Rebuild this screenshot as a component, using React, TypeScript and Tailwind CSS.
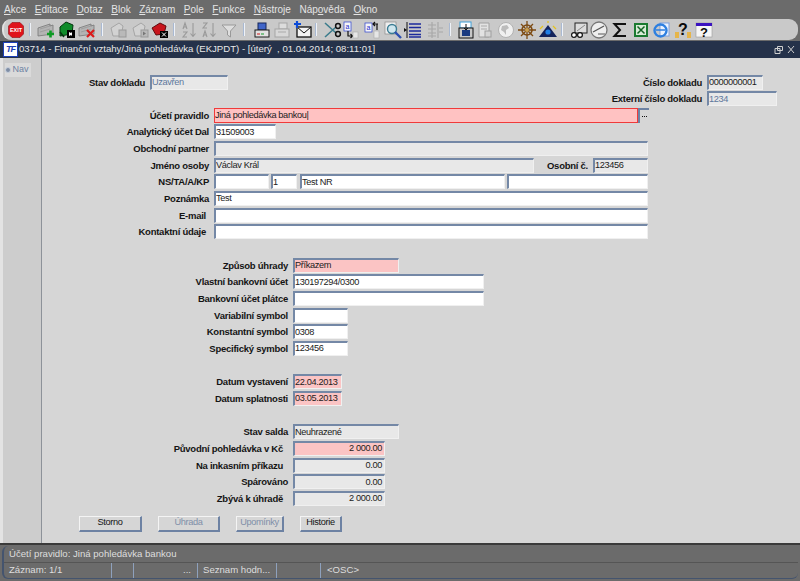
import React from "react";

const FONT = "[font-family:'Liberation_Sans',Arial,sans-serif]";

function Menu({ u, r }: { u: string; r: string }) {
  return (
    <span>
      <span className="underline">{u}</span>
      {r}
    </span>
  );
}

function Sep({ className = "" }: { className?: string }) {
  return <span className={`w-[2px] h-[13px] bg-[#a9b9d2] border-r border-[#eef2f8] shrink-0 ${className}`} />;
}

function Ico({ className = "", children }: { className?: string; children: React.ReactNode }) {
  return (
    <svg viewBox="0 0 20 20" className={`w-[20px] h-[20px] shrink-0 ${className}`}>
      {children}
    </svg>
  );
}

const Folder = ({ c, s }: { c: string; s: string }) => (
  <>
    <path d="M2 8l12-4v2l3-1v9l-15 2z" fill={c} stroke={s} strokeWidth="0.8" />
    <path d="M4 9l10-3M4 12l10-3" stroke={s} strokeWidth="0.6" opacity="0.6" />
  </>
);

function Toolbar() {
  return (
    <div className="mx-[2px] h-[21px] rounded-[9px] bg-[#c9c9c9] flex items-center pl-[2px] border-l-2 border-[#e2e2e2] overflow-hidden">
      <Ico>
        <path d="M6 2.500h8L17.500 6v8L14 17.500H6L2.500 14V6z" fill="#e0131b" stroke="#8d0c10" strokeWidth="0.6" />
        <text x="10" y="12" textAnchor="middle" fontSize="5.5" fontWeight="700" fill="#fff" fontFamily="Liberation Sans">EXIT</text>
      </Ico>
      <Sep className="ml-[3px]" />
      <Ico className="ml-[5px]">
        <Folder c="#b4b4b4" s="#777" />
        <path d="M11 14h7M14.500 10.500v7" stroke="#0e9a25" strokeWidth="2.600" />
      </Ico>
      <Ico className="ml-[1px]">
        <path d="M3 7l6-5 7 3-1 9-12 2z" fill="#0f8b2a" stroke="#04350f" />
        <path d="M3 12l4 5" stroke="#04350f" strokeWidth="1.500" />
        <rect x="10" y="10" width="8" height="8" fill="#000" />
        <path d="M12 12v4l2-1 1 1v-4l-1 1z" fill="#fff" />
      </Ico>
      <Ico>
        <Folder c="#b4b4b4" s="#777" />
        <path d="M10 10l7 7M17 10l-7 7" stroke="#db1a1a" strokeWidth="2.200" />
      </Ico>
      <Sep className="ml-[4px]" />
      <Ico className="ml-[5px]">
        <path d="M3 8l8-5 4 3-2 10H5z" fill="#d2d2d2" stroke="#a5a5a5" />
        <rect x="11" y="10" width="7" height="7" fill="#b9b9b9" stroke="#999" />
      </Ico>
      <Ico className="ml-[2px]">
        <path d="M3 8l8-5 4 3-2 10H5z" fill="#d2d2d2" stroke="#a5a5a5" />
        <rect x="11" y="10" width="7" height="7" fill="#b9b9b9" stroke="#999" />
        <path d="M13 11.500v4l3-2z" fill="#777" />
      </Ico>
      <Ico>
        <path d="M2 8l8-5 6 3-2 8-8 1z" fill="#c8141c" stroke="#5f0a0d" />
        <rect x="10" y="11" width="8" height="7" fill="#000" />
        <path d="M12 12.500l4 4M16 12.500l-4 4" stroke="#fff" />
      </Ico>
      <Sep className="ml-[3px]" />
      <Ico className="ml-[4px]">
        <path d="M4 9l2-6 2 6M4.800 7h2.400M4 12h4l-4 5h4M14 3v13M11.500 13.500l2.500 3 2.500-3" fill="none" stroke="#999" strokeWidth="1.100" />
      </Ico>
      <Ico>
        <path d="M4 3h4l-4 5h4M4 17l2-6 2 6M4.800 15h2.400M14 3v13M11.500 13.500l2.500 3 2.500-3" fill="none" stroke="#999" strokeWidth="1.100" />
      </Ico>
      <Ico>
        <path d="M3 5h14l-5.500 6v6l-3-2v-4z" fill="#dedede" stroke="#999" />
      </Ico>
      <Sep className="ml-[4px]" />
      <Ico className="ml-[7px]">
        <rect x="6" y="3" width="8" height="7" fill="#3f64c8" stroke="#16265a" />
        <rect x="3" y="10" width="14" height="7" fill="#e2e2e2" stroke="#1c1c1c" />
        <path d="M5 14h3" stroke="#d01a1a" />
        <path d="M9 14h3" stroke="#17a02c" />
      </Ico>
      <Ico>
        <rect x="7" y="3" width="8" height="6" fill="#dcdcdc" stroke="#a5a5a5" />
        <rect x="3" y="9" width="14" height="8" fill="#d8d8d8" stroke="#a5a5a5" />
        <path d="M6 12h8" stroke="#aaa" />
      </Ico>
      <Ico className="ml-[1px]">
        <rect x="4" y="7" width="14" height="10" fill="#f3f3f3" stroke="#111" strokeWidth="1.300" />
        <path d="M4 7l7 6 7-6" fill="none" stroke="#111" />
        <path d="M4 1v7M1 4h7" stroke="#0b4bd8" strokeWidth="2.200" />
      </Ico>
      <Sep className="ml-[2px]" />
      <Ico className="ml-[6px]">
        <path d="M2 3l11 10M2 17L13 7" stroke="#3b7c8c" strokeWidth="1.600" />
        <circle cx="15" cy="6" r="2.400" fill="none" stroke="#111" strokeWidth="1.500" />
        <circle cx="15" cy="14" r="2.400" fill="none" stroke="#111" strokeWidth="1.500" />
      </Ico>
      <Ico className="ml-[-3px]">
        <rect x="4" y="2" width="7" height="9" fill="#f5f5f5" stroke="#2a3fd0" strokeWidth="0.700" />
        <text x="7.500" y="9" textAnchor="middle" fontSize="7" fill="#1c2fd0" fontFamily="Liberation Sans">a</text>
        <path d="M8 11v5h4M10.500 14l2 2-2 2" fill="none" stroke="#111" strokeWidth="1.200" />
        <rect x="13" y="12" width="5" height="6" fill="#e6e6e6" stroke="#aaa" strokeWidth="0.600" />
      </Ico>
      <Ico className="ml-[2px]">
        <rect x="3" y="3" width="7" height="9" fill="#f5f5f5" stroke="#2a3fd0" strokeWidth="0.700" />
        <text x="6.500" y="10" textAnchor="middle" fontSize="7" fill="#1c2fd0" fontFamily="Liberation Sans">a</text>
        <path d="M16 4h-5M13 2l-2 2 2 2M15 4v6" fill="none" stroke="#111" strokeWidth="1.200" />
        <rect x="12" y="11" width="5" height="7" fill="#e6e6e6" stroke="#aaa" strokeWidth="0.600" />
      </Ico>
      <Ico className="ml-[1px]">
        <rect x="2" y="2" width="11" height="12" fill="#eeeeee" stroke="#8a8a8a" strokeWidth="0.700" />
        <circle cx="9" cy="9" r="4.500" fill="#cfe6ee" stroke="#3a7c93" strokeWidth="1.400" />
        <path d="M12 12l6 6" stroke="#2b4fb0" strokeWidth="2.400" />
      </Ico>
      <Ico>
        <path d="M4 2v16" stroke="#111" />
        <path d="M1 8l3 2-3 2z" fill="#111" />
        <path d="M6 4h12M6 7.500h12M6 11h12M6 14.500h12M6 17h12" stroke="#1c2a9c" strokeWidth="1.500" />
      </Ico>
      <Ico className="ml-[2px]">
        <path d="M7 2v16M13 2v16M3 5h8M3 9h8M3 13h8M3 16h8M14 8h4M14 12h4" stroke="#a8a8a8" strokeWidth="1.200" />
      </Ico>
      <Sep className="ml-[4px]" />
      <Ico className="ml-[5px]">
        <rect x="4" y="2" width="11" height="6" fill="#fff" stroke="#3f9fd8" />
        <rect x="3" y="8" width="14" height="10" fill="#c7c7c7" stroke="#111" />
        <rect x="6" y="10" width="8" height="6" fill="#1a3a80" />
        <path d="M10 4v6M8 8l2 2 2-2" fill="none" stroke="#111" />
      </Ico>
      <Ico className="ml-[-1px]">
        <path d="M4 3h10v14H4z" fill="#e2e2e2" stroke="#a0a0a0" />
        <path d="M6 6h6M6 9h6" stroke="#aaa" />
        <rect x="10" y="11" width="6" height="6" fill="#d4d4d4" stroke="#a0a0a0" />
      </Ico>
      <Ico className="ml-[1px]">
        <circle cx="10" cy="10" r="7.500" fill="#f0f0f0" stroke="#b2b2b2" />
        <path d="M6 6l5-1 2 3-3 2v5l-2-3-3-2z" fill="#bcbcbc" />
      </Ico>
      <Ico className="ml-[1px]">
        <circle cx="10" cy="10" r="5" fill="none" stroke="#7c4a12" strokeWidth="1.600" />
        <path d="M10 1v18M1 10h18M4 4l12 12M16 4L4 16" stroke="#7c4a12" strokeWidth="1.300" />
        <circle cx="10" cy="10" r="2" fill="#c9a050" />
      </Ico>
      <Ico className="ml-[1px]">
        <path d="M1 17L10 5l9 12z" fill="#13235c" />
        <circle cx="10" cy="12" r="2.600" fill="#1f7fe8" />
        <path d="M2 9l3-3M10 3v-2M18 9l-3-3" stroke="#e4c320" strokeWidth="1.300" />
      </Ico>
      <Sep className="ml-[3px]" />
      <Ico className="ml-[6px]">
        <rect x="6" y="3" width="12" height="10" fill="#dcdcdc" stroke="#222" />
        <path d="M8 11l8-6" stroke="#888" />
        <circle cx="5" cy="15" r="2.400" fill="#fff" stroke="#111" strokeWidth="1.200" />
        <circle cx="11" cy="15" r="2.400" fill="#fff" stroke="#111" strokeWidth="1.200" />
      </Ico>
      <Ico>
        <circle cx="10" cy="10" r="8" fill="#eeeeee" stroke="#777" strokeWidth="1.300" />
        <path d="M4 12l11-6" stroke="#555" strokeWidth="1.300" />
        <path d="M9 14h7" stroke="#888" strokeWidth="1.500" />
      </Ico>
      <Ico className="ml-[1px]">
        <path d="M16 4H4.500L10 10l-5.500 6H16" fill="none" stroke="#111" strokeWidth="2" />
      </Ico>
      <Ico className="ml-[1px]">
        <rect x="3" y="3" width="14" height="14" fill="#1a7a30" />
        <rect x="5" y="5" width="10" height="10" fill="#d8ecd6" />
        <path d="M6.500 6.500l7 7M13.500 6.500l-7 7" stroke="#136425" strokeWidth="1.500" />
      </Ico>
      <Ico className="ml-[1px]">
        <rect x="8" y="3" width="9" height="13" fill="#eaf2ff" stroke="#7ea0dc" />
        <circle cx="8.500" cy="10.500" r="6" fill="none" stroke="#2d7fe0" strokeWidth="2.400" />
        <path d="M4 10h9" stroke="#2d7fe0" strokeWidth="1.500" />
      </Ico>
      <Ico className="ml-[1px]">
        <rect x="2" y="12" width="4" height="6" fill="#e6b54a" />
        <rect x="14" y="12" width="4" height="6" fill="#e6b54a" />
        <text x="10" y="15" textAnchor="middle" fontSize="16" fontWeight="700" fill="#0a0a0a" fontFamily="Liberation Sans">?</text>
      </Ico>
      <Ico className="ml-[1px]">
        <rect x="2" y="3" width="16" height="14" fill="#f6f6f6" stroke="#999" strokeWidth="0.600" />
        <rect x="2" y="3" width="16" height="3" fill="#3a12c0" />
        <text x="10" y="17" textAnchor="middle" fontSize="13" fontWeight="700" fill="#0a0a0a" fontFamily="Liberation Sans">?</text>
      </Ico>
    </div>
  );
}

type Tone = "white" | "gray" | "pink" | "error";
const TONES: Record<Tone, string> = {
  white: "bg-white",
  gray: "bg-[#e8e8e8]",
  pink: "bg-[#fbc4c4]",
  error: "bg-[#ffc2c2]",
};

function Field({
  w,
  v = "",
  tone = "white",
  right = false,
  muted = false,
}: {
  w: string;
  v?: string;
  tone?: Tone;
  right?: boolean;
  muted?: boolean;
}) {
  const border =
    tone === "error"
      ? "border border-[#f03a3a]"
      : "border-t-2 border-l-2 border-t-[#7488a6] border-l-[#7488a6] border-r border-b border-r-[#f0f0f0] border-b-[#f0f0f0]";
  return (
    <div
      className={`${w} h-[15px] shrink-0 ${TONES[tone]} ${border} flex items-center overflow-hidden whitespace-nowrap text-[9.200px] tracking-[-0.35px] leading-none pr-[2px] ${right ? "justify-end" : ""} ${muted ? "text-[#5e779c]" : "text-[#1b1b1b]"}`}
    >
      {v}
    </div>
  );
}

function Label({ w, t, pr = "" }: { w: string; t: string; pr?: string }) {
  return (
    <div className={`${w} ${pr} shrink-0 mr-[5px] text-right font-bold text-[9.500px] tracking-[-0.25px] leading-[15px] text-[#141414] whitespace-nowrap`}>
      {t}
    </div>
  );
}

function Row({ children }: { children?: React.ReactNode }) {
  return <div className="h-[16.67px] flex items-start">{children}</div>;
}

function Btn({ w, t, off = false, className = "" }: { w: string; t: string; off?: boolean; className?: string }) {
  return (
    <div
      className={`${w} h-[16px] shrink-0 flex items-center justify-center text-[9.200px] tracking-[-0.35px] bg-[#d6d6d6] border border-[#f4f4f4] border-r-[#6d82a3] border-b-[#6d82a3] border-r-2 border-b-2 ${off ? "text-[#7e8ea8]" : "text-[#141414]"} ${className}`}
    >
      {t}
    </div>
  );
}

function F1({ t, pr, children }: { t: string; pr?: string; children?: React.ReactNode }) {
  return (
    <Row>
      <Label w="w-[167px]" t={t} pr={pr} />
      {children}
    </Row>
  );
}

function F2({ t, pr, children }: { t: string; pr?: string; children?: React.ReactNode }) {
  return (
    <Row>
      <Label w="w-[246px]" t={t} pr={pr} />
      {children}
    </Row>
  );
}

export default function App() {
  return (
    <div className={`w-[800px] h-[581px] overflow-hidden flex flex-col bg-[#6b6b6b] ${FONT}`}>
      <div className="h-[19px] flex items-center gap-[8.500px] pl-[4px] text-[10px] text-[#e4e4e4]">
        <Menu u="A" r="kce" />
        <Menu u="E" r="ditace" />
        <Menu u="D" r="otaz" />
        <Menu u="B" r="lok" />
        <Menu u="Z" r="áznam" />
        <Menu u="P" r="ole" />
        <Menu u="F" r="unkce" />
        <Menu u="N" r="ástroje" />
        <span>
          Náp<span className="underline">o</span>věda
        </span>
        <Menu u="O" r="kno" />
      </div>
      <Toolbar />
      <div className="h-[17px] mt-[1px] bg-[#25324a] flex items-center pl-[3px] pr-[4px] text-[9.600px] text-[#e8e8e8] whitespace-pre">
        <div className="w-[15px] h-[15px] bg-white border border-[#1c3fb8] flex items-center justify-center text-[#1c3fb8] font-bold italic text-[9px] tracking-[-1px] leading-none mr-[1px]">
          TF
        </div>
        <span>03714 - Finanční vztahy/Jiná pohledávka (EKJPDT) - [úterý  , 01.04.2014; 08:11:01]</span>
        <svg viewBox="0 0 22 10" className="w-[22px] h-[10px] ml-auto text-[#cfcfcf]">
          <path d="M3.500 1.500h5v4h-5zM1 3.500h5v5H1zM14 1l6 7M20 1l-6 7" fill="none" stroke="currentColor" />
        </svg>
      </div>
      <div className="h-[487px] flex bg-[#d6d6d6] border-b-2 border-[#3a3a3a]">
        <div className="w-[42px] shrink-0 bg-[#cdcdcd] border-l-[3px] border-l-[#e3e3e3] border-r border-r-[#8d9299] pl-[2px] pt-[5px]">
          <div className="w-[26px] h-[14px] bg-[#dadada] flex items-center text-[9px] text-[#6d82a3] gap-[1.500px]">
            <span className="w-[6px] h-[6px] rounded-full bg-[#7f8ea5] border border-[#c8d0dc]" />
            Nav
          </div>
        </div>
        <div className="flex-1 pt-[16.500px]">
          <Row>
            <Label w="w-[103px]" t="Stav dokladu" />
            <Field w="w-[78px]" v="Uzavřen" tone="gray" muted />
            <div className="ml-auto flex mr-[37px]">
              <Label w="w-auto" t="Číslo dokladu" />
              <Field w="w-[56px]" v="0000000001" tone="gray" />
            </div>
          </Row>
          <Row>
            <div className="ml-auto flex mr-[23px]">
              <Label w="w-auto" t="Externí číslo dokladu" />
              <Field w="w-[70px]" v="1234" tone="gray" muted />
            </div>
          </Row>
          <F1 t="Účetí pravidlo">
            <Field w="w-[424px]" v="Jiná pohledávka bankou|" tone="error" />
            <div className="w-[11px] h-[15px] bg-[#d6d6d6] border-t-2 border-l-2 border-[#6d82a3] flex items-center justify-center gap-[1px]">
              <span className="w-[1px] h-[1px] bg-[#111]" />
              <span className="w-[1px] h-[1px] bg-[#111]" />
              <span className="w-[1px] h-[1px] bg-[#111]" />
            </div>
          </F1>
          <F1 t="Analytický účet Dal">
            <Field w="w-[62px]" v="31509003" />
          </F1>
          <F1 t="Obchodní partner">
            <Field w="w-[434px]" tone="gray" />
          </F1>
          <F1 t="Jméno osoby">
            <Field w="w-[320px]" v="Václav Král" tone="gray" />
            <Label w="w-[54px]" t="Osobní č." />
            <Field w="w-[55px]" v="123456" tone="gray" />
          </F1>
          <F1 t="NS/TA/A/KP">
            <Field w="w-[55px]" />
            <div className="w-[2px]" />
            <Field w="w-[26px]" v="1" />
            <div className="w-[3px]" />
            <Field w="w-[205px]" v="Test NR" />
            <div className="w-[2px]" />
            <Field w="w-[141px]" />
          </F1>
          <F1 t="Poznámka">
            <Field w="w-[434px]" v="Test" />
          </F1>
          <F1 t="E-mail" pr="pr-[3px]">
            <Field w="w-[434px]" />
          </F1>
          <F1 t="Kontaktní údaje" pr="pr-[3px]">
            <Field w="w-[434px]" />
          </F1>
          <Row />
          <F2 t="Způsob úhrady">
            <Field w="w-[106px]" v="Příkazem" tone="pink" />
          </F2>
          <F2 t="Vlastní bankovní účet">
            <Field w="w-[191px]" v="130197294/0300" />
          </F2>
          <F2 t="Bankovní účet plátce">
            <Field w="w-[191px]" />
          </F2>
          <F2 t="Variabilní symbol">
            <Field w="w-[55px]" />
          </F2>
          <F2 t="Konstantní symbol">
            <Field w="w-[55px]" v="0308" />
          </F2>
          <F2 t="Specifický symbol">
            <Field w="w-[55px]" v="123456" />
          </F2>
          <Row />
          <F2 t="Datum vystavení">
            <Field w="w-[49px]" v="22.04.2013" tone="pink" />
          </F2>
          <F2 t="Datum splatnosti">
            <Field w="w-[49px]" v="03.05.2013" tone="pink" />
          </F2>
          <Row />
          <F2 t="Stav salda">
            <Field w="w-[106px]" v="Neuhrazené" tone="gray" />
          </F2>
          <F2 t="Původní pohledávka v Kč" pr="pr-[5px]">
            <Field w="w-[92px]" v="2 000.00" tone="pink" right />
          </F2>
          <F2 t="Na inkasním příkazu" pr="pr-[5px]">
            <Field w="w-[92px]" v="0.00" tone="gray" right />
          </F2>
          <F2 t="Spárováno">
            <Field w="w-[92px]" v="0.00" tone="gray" right />
          </F2>
          <F2 t="Zbývá k úhradě" pr="pr-[5px]">
            <Field w="w-[92px]" v="2 000.00" tone="gray" right />
          </F2>
          <div className="flex mt-[8px] pl-[37px]">
            <Btn w="w-[63px]" t="Storno" />
            <Btn w="w-[62px]" t="Úhrada" off className="ml-[16px]" />
            <Btn w="w-[48px]" t="Upomínky" off className="ml-[16px]" />
            <Btn w="w-[42px]" t="Historie" className="ml-[16px]" />
          </div>
        </div>
      </div>
      <div className="flex-1 mx-[2px] mb-[2px] mt-[1px] rounded-[6px] border-l-2 border-b border-[#44546e] text-[9.600px] text-[#dedede] flex flex-col whitespace-nowrap">
        <div className="h-[16px] flex items-center pl-[5px]">Účetí pravidlo: Jiná pohledávka bankou</div>
        <div className="flex-1 flex items-center pl-[5px] border-t border-[#555]">
          <div className="w-[103px] h-full flex items-center border-r border-[#8ea1bd]">Záznam: 1/1</div>
          <div className="w-[22px] h-full border-r border-[#8ea1bd]" />
          <div className="w-[64px] h-full flex items-center justify-end pr-[6px] border-r border-[#8ea1bd]">...</div>
          <div className="w-[79px] h-full flex items-center pl-[5px] border-r border-[#8ea1bd]">Seznam hodn...</div>
          <div className="w-[44px] h-full border-r border-[#8ea1bd]" />
          <div className="h-full flex items-center pl-[6px]">&lt;OSC&gt;</div>
        </div>
      </div>
    </div>
  );
}
